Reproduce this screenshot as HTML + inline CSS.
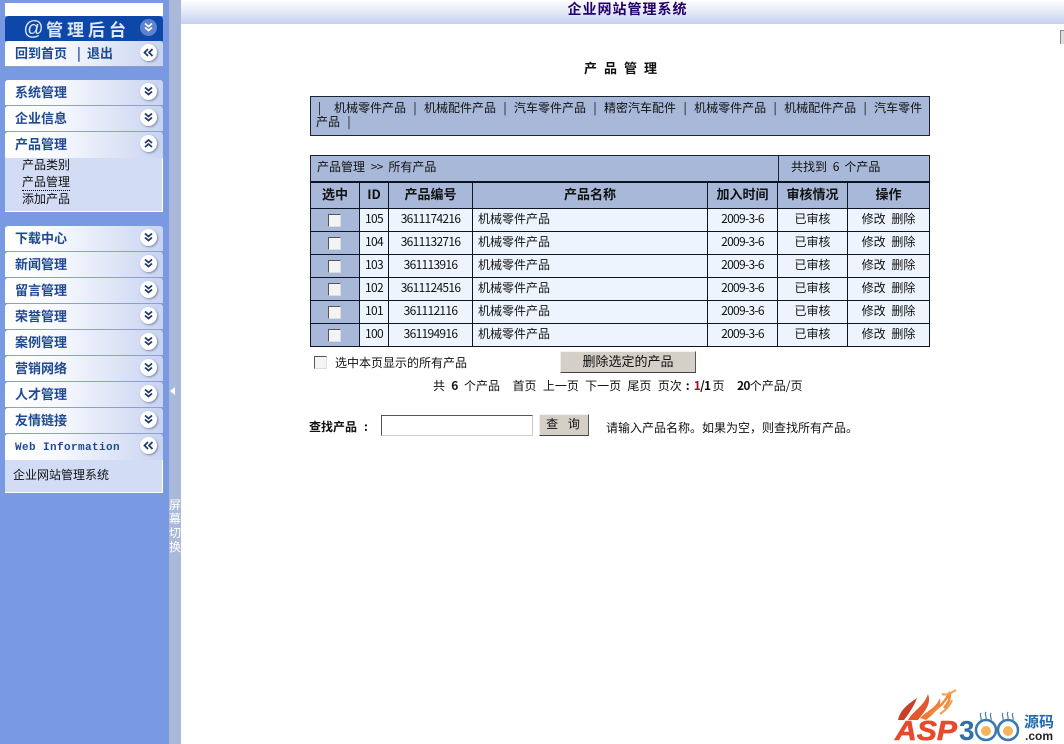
<!DOCTYPE html>
<html lang="zh"><head><meta charset="utf-8"><title>企业网站管理系统</title>
<style>
html,body{margin:0;padding:0;width:1064px;height:744px;overflow:hidden;background:#fff}
body{position:relative;font:12px/14px "WenQuanYi Zen Hei","Noto Sans CJK SC",sans-serif;color:#111;word-spacing:3px}
.a{position:absolute;white-space:nowrap}
.d{letter-spacing:-.7px;word-spacing:0}
.db{font-weight:bold;letter-spacing:-.7px;word-spacing:0}
#side{left:0;top:0;width:169px;height:744px;background:#7a99e3}
#strip{left:169px;top:0;width:12px;height:744px;background:#aab9da}
#top{left:181px;top:0;width:883px;height:24px;padding-left:10px;box-sizing:border-box;background:linear-gradient(#fff,#c5d2ef);text-align:center;font-weight:bold;font-size:14px;letter-spacing:1px;line-height:19px;color:#23006a}
.g{left:5px;width:158px;height:25px;background:linear-gradient(90deg,#fff 0,#f6f8fd 35%,#c9d4f1 100%);border-bottom:1px solid #8d9fd0;border-radius:3px 3px 0 0;color:#1f4a91;font-weight:bold;font-size:13px;line-height:24px;text-indent:10px}
.b{position:absolute;right:6px;top:3px;width:17px;height:17px;border-radius:50%;background:#fff;box-shadow:1px 1px 2px #7d88a8;text-indent:0}
.b svg{position:absolute;left:3px;top:3px}
.bd{left:5px;width:157px;background:#d3dcf5;border:solid #fff;border-width:0 1px 1px 0}
.bar{background:#a8b8d8;border:1px solid #1a2233;box-sizing:border-box}
.sp{display:inline-block;width:18px;text-align:center;font-style:normal}
table{position:absolute;left:310px;top:181px;width:620px;border-collapse:collapse;table-layout:fixed}
td,th{border:1px solid #0d1524;text-align:center;padding:0;font-size:12px;overflow:hidden;white-space:nowrap}
th{background:#a8b8d8;height:22px;padding-bottom:3px;font-size:13px;color:#111}
table tr:first-child th{border-top-width:2px}
td{background:#eef4fd;height:19px;padding-bottom:3px}
td.n{text-align:left;padding-left:5px}
td.c{background:#a8b8d8;padding:1px 1px 2px 0}
td.d{padding-bottom:2px;height:20px}
.cb{display:inline-block;width:11px;height:11px;background:#f4f4f4;border:1px solid;border-color:#555 #ddd #ddd #555;vertical-align:middle}
.btn{background:#d4d0c8;border:1px solid;border-color:#f4f3f0 #555 #444 #eee;box-sizing:border-box;text-align:center}
</style></head><body>
<div class="a" id="side"></div>
<div class="a" id="strip"></div>
<div class="a" style="left:170px;top:387px;width:0;height:0;border:4px solid transparent;border-right:5px solid #fff;border-left:0"></div>
<div class="a" style="left:169px;top:498px;width:12px;color:#fff;font-size:12px;line-height:14px;white-space:normal;text-align:center">屏幕切换</div>
<div class="a" id="top">企业网站管理系统</div>

<div class="a" style="left:5px;top:3px;width:158px;height:13px;background:#fff"></div>
<div class="a" style="left:5px;top:16px;width:158px;height:25px;background:#0d47a8;border-radius:4px 4px 0 0;color:#dfe7fa;font-weight:bold;font-size:17px;line-height:26px;letter-spacing:4px;word-spacing:0"><i style="font:italic 20px/26px 'Liberation Sans';position:absolute;left:18px;top:0">@</i><span style="position:absolute;left:41px;top:0">管理后台</span>
<span class="b" style="background:#5d82cf;top:3px;box-shadow:none"><svg width="11" height="11" viewBox="0 0 11 11"><path d="M2 1.5l3.500 3 3.500-3M2 5.500l3.500 3 3.500-3" fill="none" stroke="#fff" stroke-width="1.700"/></svg></span></div>
<div class="a g" style="top:41px"><span style="position:absolute;left:0">回到首页</span><span style="position:absolute;left:62px">|</span><span style="position:absolute;left:72px">退出</span><span class="b"><svg width="11" height="11" viewBox="0 0 11 11"><path d="M5 2L1.500 5.500 5 9M9.500 2L6 5.500 9.500 9" fill="none" stroke="#1b3566" stroke-width="1.700"/></svg></span></div>

<div class="a g" style="top:80px">系统管理<span class="b"><svg width="11" height="11" viewBox="0 0 11 11"><path d="M2 1.500l3.500 3 3.500-3M2 5.500l3.500 3 3.500-3" fill="none" stroke="#1b3566" stroke-width="1.700"/></svg></span></div>
<div class="a g" style="top:106px">企业信息<span class="b"><svg width="11" height="11" viewBox="0 0 11 11"><path d="M2 1.500l3.500 3 3.500-3M2 5.500l3.500 3 3.500-3" fill="none" stroke="#1b3566" stroke-width="1.700"/></svg></span></div>
<div class="a g" style="top:132px;border-bottom:0;height:26px">产品管理<span class="b"><svg width="11" height="11" viewBox="0 0 11 11"><path d="M2 5l3.500-3L9 5M2 9l3.500-3L9 9" fill="none" stroke="#1b3566" stroke-width="1.700"/></svg></span></div>
<div class="a bd" style="top:158px;height:53px"></div>
<div class="a" style="left:22px;top:156px;line-height:17px">产品类别<br><span style="border-bottom:1px dotted #000">产品管理</span><br>添加产品</div>

<div class="a g" style="top:226px">下载中心<span class="b"><svg width="11" height="11" viewBox="0 0 11 11"><path d="M2 1.500l3.500 3 3.500-3M2 5.500l3.500 3 3.500-3" fill="none" stroke="#1b3566" stroke-width="1.700"/></svg></span></div>
<div class="a g" style="top:252px">新闻管理<span class="b"><svg width="11" height="11" viewBox="0 0 11 11"><path d="M2 1.500l3.500 3 3.500-3M2 5.500l3.500 3 3.500-3" fill="none" stroke="#1b3566" stroke-width="1.700"/></svg></span></div>
<div class="a g" style="top:278px">留言管理<span class="b"><svg width="11" height="11" viewBox="0 0 11 11"><path d="M2 1.500l3.500 3 3.500-3M2 5.500l3.500 3 3.500-3" fill="none" stroke="#1b3566" stroke-width="1.700"/></svg></span></div>
<div class="a g" style="top:304px">荣誉管理<span class="b"><svg width="11" height="11" viewBox="0 0 11 11"><path d="M2 1.500l3.500 3 3.500-3M2 5.500l3.500 3 3.500-3" fill="none" stroke="#1b3566" stroke-width="1.700"/></svg></span></div>
<div class="a g" style="top:330px">案例管理<span class="b"><svg width="11" height="11" viewBox="0 0 11 11"><path d="M2 1.500l3.500 3 3.500-3M2 5.500l3.500 3 3.500-3" fill="none" stroke="#1b3566" stroke-width="1.700"/></svg></span></div>
<div class="a g" style="top:356px">营销网络<span class="b"><svg width="11" height="11" viewBox="0 0 11 11"><path d="M2 1.500l3.500 3 3.500-3M2 5.500l3.500 3 3.500-3" fill="none" stroke="#1b3566" stroke-width="1.700"/></svg></span></div>
<div class="a g" style="top:382px">人才管理<span class="b"><svg width="11" height="11" viewBox="0 0 11 11"><path d="M2 1.500l3.500 3 3.500-3M2 5.500l3.500 3 3.500-3" fill="none" stroke="#1b3566" stroke-width="1.700"/></svg></span></div>
<div class="a g" style="top:408px">友情链接<span class="b"><svg width="11" height="11" viewBox="0 0 11 11"><path d="M2 1.500l3.500 3 3.500-3M2 5.500l3.500 3 3.500-3" fill="none" stroke="#1b3566" stroke-width="1.700"/></svg></span></div>
<div class="a g" style="top:434px;height:26px;border-bottom:0;font:bold 11px/28px 'Liberation Mono',monospace;letter-spacing:.4px;word-spacing:0">Web Information<span class="b"><svg width="11" height="11" viewBox="0 0 11 11"><path d="M5 2L1.500 5.500 5 9M9.500 2L6 5.500 9.500 9" fill="none" stroke="#1b3566" stroke-width="1.700"/></svg></span></div>
<div class="a bd" style="top:460px;height:32px"></div>
<div class="a" style="left:13px;top:468px">企业网站管理系统</div>

<div class="a" style="left:584px;top:61px;font-weight:bold;font-size:13px;letter-spacing:7px">产品管理</div>
<div class="a bar" style="left:310px;top:96px;width:620px;height:40px;padding:4px 5px;line-height:14px"><i class="sp" style="text-align:left;padding-left:2px;width:16px">|</i>机械零件产品<i class="sp">|</i>机械配件产品<i class="sp">|</i>汽车零件产品<i class="sp">|</i>精密汽车配件<i class="sp">|</i>机械零件产品<i class="sp">|</i>机械配件产品<i class="sp">|</i>汽车零件<br>产品<i class="sp">|</i></div>

<div class="a bar" style="left:310px;top:155px;width:469px;height:27px;padding-left:6px;line-height:21px">产品管理 <span class="d">&gt;&gt;</span> 所有产品</div>
<div class="a bar" style="left:778px;top:155px;width:152px;height:27px;padding-left:12px;line-height:21px">共找到 <span class="d">6</span> 个产品</div>

<table>
<colgroup><col style="width:49px"><col style="width:29px"><col style="width:84px"><col style="width:235px"><col style="width:70px"><col style="width:70px"><col style="width:82px"></colgroup>
<tr><th>选中</th><th>ID</th><th>产品编号</th><th>产品名称</th><th>加入时间</th><th>审核情况</th><th>操作</th></tr>
<tr><td class="c"><span class="cb"></span></td><td class="d">105</td><td class="d">3611174216</td><td class="n">机械零件产品</td><td class="d">2009-3-6</td><td>已审核</td><td>修改 删除</td></tr>
<tr><td class="c"><span class="cb"></span></td><td class="d">104</td><td class="d">3611132716</td><td class="n">机械零件产品</td><td class="d">2009-3-6</td><td>已审核</td><td>修改 删除</td></tr>
<tr><td class="c"><span class="cb"></span></td><td class="d">103</td><td class="d">361113916</td><td class="n">机械零件产品</td><td class="d">2009-3-6</td><td>已审核</td><td>修改 删除</td></tr>
<tr><td class="c"><span class="cb"></span></td><td class="d">102</td><td class="d">3611124516</td><td class="n">机械零件产品</td><td class="d">2009-3-6</td><td>已审核</td><td>修改 删除</td></tr>
<tr><td class="c"><span class="cb"></span></td><td class="d">101</td><td class="d">361112116</td><td class="n">机械零件产品</td><td class="d">2009-3-6</td><td>已审核</td><td>修改 删除</td></tr>
<tr><td class="c"><span class="cb"></span></td><td class="d">100</td><td class="d">361194916</td><td class="n">机械零件产品</td><td class="d">2009-3-6</td><td>已审核</td><td>修改 删除</td></tr>
</table>

<div class="a" style="left:314px;top:355px"><span class="cb"></span></div>
<div class="a" style="left:335px;top:356px">选中本页显示的所有产品</div>
<div class="a btn" style="left:560px;top:351px;width:136px;height:22px;line-height:17px;font-size:13px">删除选定的产品</div>
<div class="a" style="left:433px;top:379px;word-spacing:3.6px">共 <span class="db">6</span> 个产品&nbsp; 首页 上一页 下一页 尾页 页次<b style="display:inline-block;width:12px;text-align:center">:</b><span class="db" style="color:#a01020">1</span><span class="db">/1</span><span style="margin-left:2px">页</span>&nbsp; <span class="db">20</span>个产品/页</div>
<div class="a" style="left:309px;top:420px;font-weight:bold">查找产品<span style="margin-left:7px">:</span></div>
<div class="a" style="left:381px;top:415px;width:152px;height:21px;box-sizing:border-box;background:#fff;border:1px solid;border-color:#555 #ccc #ccc #555"></div>
<div class="a btn" style="left:539px;top:414px;width:50px;height:22px;line-height:17px;letter-spacing:2px">查 询</div>
<div class="a" style="left:606px;top:421px">请输入产品名称。如果为空，则查找所有产品。</div>

<div class="a" style="left:1060px;top:30px;width:4px;height:14px;background:#ddd;border-left:1px solid #888;border-top:1px solid #888;box-sizing:border-box"></div>

<svg class="a" style="left:890px;top:686px" width="174" height="58" viewBox="0 0 174 58">
<path d="M8 34C10 24 18 18 27 12C24 20 20 26 14 34Z" fill="#c8402a"/>
<path d="M18 34C24 24 34 20 38 8C42 18 34 26 28 34Z" fill="#e2572c"/>
<path d="M30 32C38 24 46 22 50 12C52 20 44 28 36 34Z" fill="#ef7a34"/>
<path d="M40 28C48 22 54 18 60 6C60 14 58 18 54 22" fill="none" stroke="#f08a3c" stroke-width="2.500"/>
<path d="M52 8C58 10 62 6 66 4" fill="none" stroke="#f2a04a" stroke-width="2"/>
<path d="M50 28C56 24 60 20 62 14" fill="none" stroke="#f2a04a" stroke-width="2"/>
<text x="5" y="54" font-family="Liberation Sans" font-weight="bold" font-style="italic" font-size="28" fill="#e8492a" stroke="#e8492a" stroke-width=".6" textLength="62" lengthAdjust="spacingAndGlyphs" style="word-spacing:0">ASP</text>
<text y="54" font-family="Liberation Sans" font-weight="bold" font-size="28" fill="#2f70a8"><tspan x="69">3</tspan><tspan x="88">0</tspan><tspan x="110">0</tspan></text>
<circle cx="96" cy="44" r="10" fill="#fff" stroke="#3a78ad" stroke-width="2.500"/><circle cx="96" cy="45" r="5" fill="#f4b55a"/>
<circle cx="118" cy="44" r="10" fill="#fff" stroke="#3a78ad" stroke-width="2.500"/><circle cx="118" cy="45" r="5" fill="#f4b55a"/>
<path d="M91 27C89 30 92 31 91 34M96 26C94 29 97 30 96 33M101 27C99 30 102 31 101 34M113 27C111 30 114 31 113 34M118 26C116 29 119 30 118 33M123 27C121 30 124 31 123 34" fill="none" stroke="#4a7fa8" stroke-width="1.200"/>
<text x="134" y="41" font-family="Noto Sans CJK SC" font-weight="bold" font-size="15" fill="#1e6ab0" style="word-spacing:0">源码</text>
<text x="135" y="54" font-family="Liberation Sans" font-weight="bold" font-size="12" fill="#222">.com</text>
</svg>
</body></html>
